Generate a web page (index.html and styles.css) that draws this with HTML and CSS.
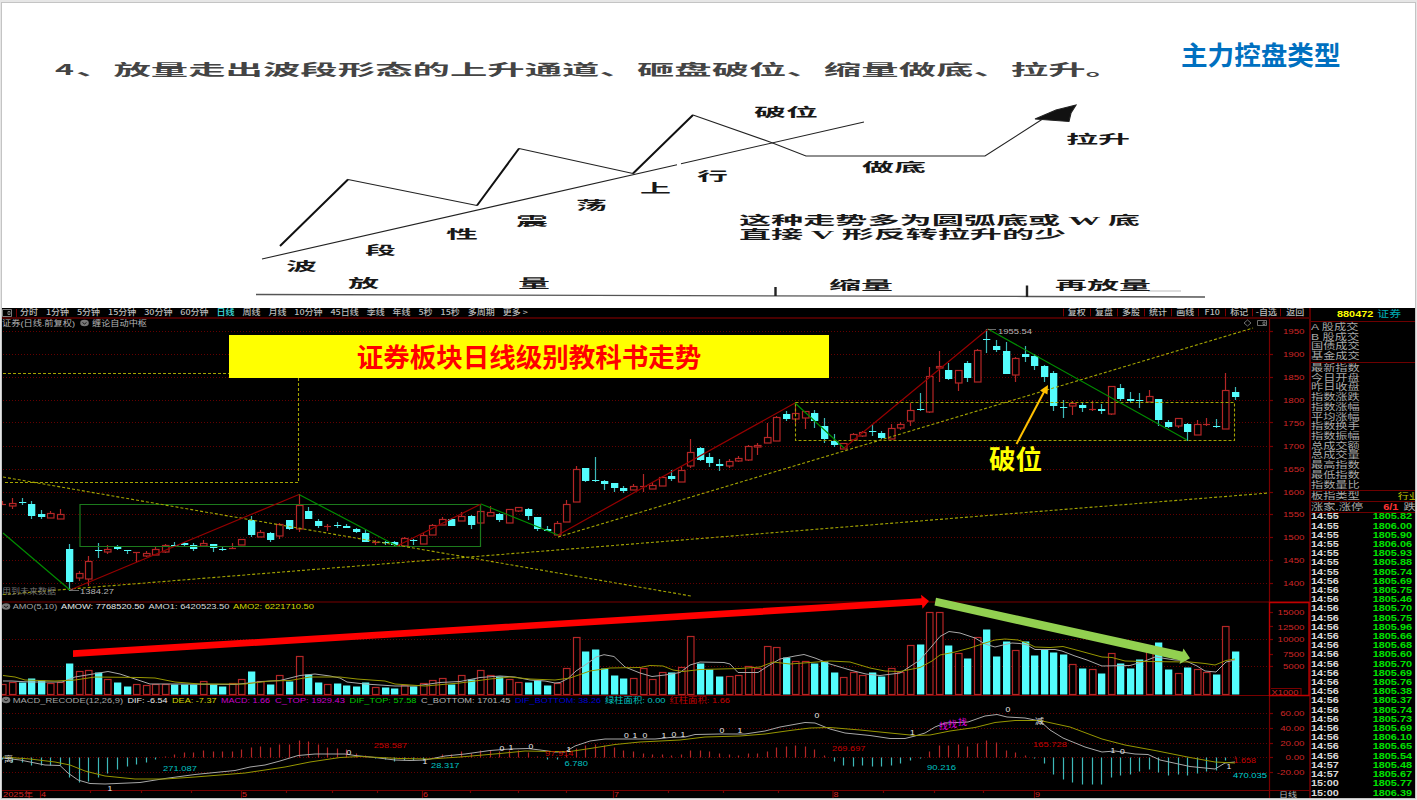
FILE: index.html
```html
<!doctype html>
<html lang="zh-CN">
<head>
	<meta charset="UTF-8">
	<title>主力控盘类型</title>
	<link rel="stylesheet" href="styles.css">
</head>
<body>
	<div class="slide">
		<section class="theory">
			<svg id="theory" viewBox="2 3 1413 305" width="1413" height="305">
				<g class="sketch">
					<path d="M262 259L677 164.700M681 163.700L864 122"/>
					<path d="M348 179.500L477 205.500M519 148.500L633 173.500M693 115L770 142L806 156H985L1052 113"/>
					<path class="bold" d="M280 246L348 179.500M477 205.500L519 148.500M633 173.500L693 115"/>
					<path class="axis" d="M256 294.500L1028 296.500L1205 297"/>
					<path class="faint" d="M1148 291H1181"/>
					<path class="tick" d="M775.500 287V296M1027 285.500V297"/>
					<path class="head" d="M1076 105L1056 110L1035 119L1069 121.500L1071 113Z"/>
				</g>
			</svg>
			<h1>主力控盘类型</h1>
		</section>

		<section class="terminal">
			<div class="main">
				<nav class="toolbar">
					<svg class="panel-icon" viewBox="0 0 10 8" width="10" height="8"><path d="M.5 .5H9.500V7.500H.5ZM6 2.500H8V5.500H6Z"/></svg>
					<div class="periods">
						<span>分时</span><span>1分钟</span><span>5分钟</span><span>15分钟</span><span>30分钟</span><span>60分钟</span>
						<span class="active">日线</span><span>周线</span><span>月线</span><span>10分钟</span><span>45日线</span><span>季线</span>
						<span>年线</span><span>5秒</span><span>15秒</span><span>多周期</span><span>更多 &gt;</span>
					</div>
					<div class="tools">
						<span>复权</span><span>复盘</span><span>多股</span><span>统计</span><span>画线</span><span>F10</span><span>标记</span><span>-自选</span><span>返回</span>
					</div>
				</nav>
				<svg id="chart" viewBox="2 319 1308 479" width="1308" height="479"></svg>
				<div class="banner">证券板块日线级别教科书走势</div>
				<div class="break">破位</div>
			</div>

			<aside class="quote">
				<header><b>880472</b><span>证券</span></header>
				<ul class="market">
					<li>A 股成交</li><li>B 股成交</li><li>国债成交</li><li>基金成交</li>
				</ul>
				<ul class="index">
					<li>最新指数</li><li>今日开盘</li><li>昨日收盘</li><li>指数涨跌</li><li>指数涨幅</li><li>平均涨幅</li><li>指数换手</li>
					<li>指数振幅</li><li>总成交额</li><li>总成交量</li><li>最高指数</li><li>最低指数</li><li>指数量比</li>
				</ul>
				<div class="row"><span>板指类型</span><i>行业</i></div>
				<div class="row count"><span>涨家.涨停</span><b>6/1</b><span>跌</span></div>
				<ol id="ticks"></ol>
			</aside>
		</section>
	</div>
	<script src="chart.js"></script>
</body>
</html>
```
FILE: styles.css
```css
html, body {height: 100%; margin: 0;}
body {
	overflow: hidden;
	background: #e6e6e6;
	font-family: "Liberation Sans", "Noto Sans CJK SC", sans-serif;
}
svg {display: block;}
ul, ol {list-style: none; margin: 0; padding: 0;}

.slide {
	width: 1413px; height: 795px;
	margin: 2px 1px 0;
	border: 1px solid #c4c4c4;
}

/* theory sketch */
.theory {
	position: relative;
	height: 305px;
	background: white;
}
.theory h1 {
	position: absolute;
	top: 33px; left: 1179px;
	margin: 0;
	font: bold 26.6px/36px "Noto Sans CJK SC", sans-serif;
	color: #0070c0;
	white-space: nowrap;
}
.sketch {fill: none; stroke: #222; stroke-width: 1.1;}
.sketch .bold {stroke: #111; stroke-width: 2;}
.sketch .axis {stroke: #555; stroke-width: 1.3;}
.sketch .faint {stroke: #aaa; stroke-width: .8;}
.sketch .tick {stroke-width: 2.4;}
.sketch .head {fill: #111;}

/* trading terminal */
.terminal {
	display: grid;
	grid-template-columns: 1308px 105px;
	height: 490px;
	background: black;
	overflow: hidden;
}
.main {position: relative;}
.toolbar {
	display: flex;
	align-items: center;
	height: 9px;
	border-bottom: 2px solid #4a0000;
	font: 500 9px/9px "Noto Sans CJK SC", sans-serif;
	color: #bcbcbc;
	white-space: nowrap;
}
.toolbar span {transform: scaleY(.84);}
.panel-icon {fill: none; stroke: #999; stroke-width: .8; padding-right: 4px; border-right: 1px solid #700;}
.periods {
	display: flex;
	justify-content: space-between;
	width: 508px;
	margin-left: 3px;
}
.periods .active {color: #3fe0e0;}
.tools {
	display: grid;
	grid-template-columns: repeat(8, 27.1px) 30.5px;
	margin-left: auto;
	text-align: center;
}
.tools span {border-left: 1px solid #800000;}
.banner {
	position: absolute;
	left: 227px; top: 27px;
	width: 600px; height: 43px;
	background: #ff0;
	color: red;
	font: bold 26.5px/42px "Noto Sans CJK SC", sans-serif;
	text-align: center;
}
.break {
	position: absolute;
	left: 987px; top: 131px;
	color: #ff0;
	font: bold 26.6px/38px "Noto Sans CJK SC", sans-serif;
}

/* chart */
.grid {stroke: #640000; stroke-width: 1; stroke-dasharray: 1 2;}
.frame {fill: none; stroke: #780000; stroke-width: 1.2;}
.frame.hot {stroke: #c00000; stroke-width: 1.3;}
.dash {fill: none; stroke: #a4a400; stroke-width: 1.1; stroke-dasharray: 3 2;}
.up {fill: black; stroke: #b42626; stroke-width: 1.2;}
.up-wick {stroke: #b42626; stroke-width: 1.2;}
.down {fill: #54fcfc;}
.down-wick {stroke: #3cb8b8; stroke-width: 1.2;}
.rise {fill: none; stroke: #960000; stroke-width: 1.2;}
.fall {fill: none; stroke: #008c00; stroke-width: 1.2;}
.pivot {fill: none; stroke: #1c7a1c; stroke-width: 1.2;}
.fast {fill: none; stroke: #a8a8a8; stroke-width: 1;}
.slow {fill: none; stroke: #969600; stroke-width: 1;}
.icon {fill: none; stroke: #888; stroke-width: .8;}

/* quote panel */
.quote {
	border-left: 2px solid #5a0000;
	margin-left: -1px;
	overflow: hidden;
	color: #a8a8a8;
	font: 12.2px/9.73px "Liberation Sans", "Noto Sans CJK SC", sans-serif;
	white-space: nowrap;
}
.quote header {
	height: 13px;
	border-bottom: 1px solid #6e0000;
	padding-left: 26px;
	line-height: 12px;
}
.quote header b {color: #ff0; font-size: 10.9px; display: inline-block; transform: scaleY(.78);}
.quote header span {color: #00b0b8; font-size: 11.8px; margin-left: 4px; display: inline-block; transform: scaleY(.8);}
.quote li {height: 9.73px; transform: scaleY(.74);}
.market {padding: 1px 0 0; height: 39px; border-bottom: 1px solid #6e0000;}
.index {padding: 1px 0 0; height: 126px; border-bottom: 1px solid #6e0000;}
.row {
	display: flex;
	height: 10px;
	border-bottom: 1px solid #6e0000;
	line-height: 10px;
}
.row > * {transform: scaleY(.76);}
.row i {margin-left: 38px; font-style: normal; color: #c0c000; font-size: 11px;}
.row b {margin: 0 5px 0 20px; color: #f33; font-size: 11px;}
#ticks {margin-top: -.6px;}
#ticks li {
	display: flex;
	justify-content: space-between;
	height: 9.215px;
	padding-right: 3px;
	font: bold 10.9px/9.21px "Liberation Sans", sans-serif;
	transform: scaleY(.75);
	color: #d8d8d8;
}
#ticks b {color: #00e000;}
```
FILE: chart.js
```js
var NS = 'http://www.w3.org/2000/svg';
var chart = document.getElementById('chart');
var theory = document.getElementById('theory');

function add(parent, tag, attrs) {
	var el = document.createElementNS(NS, tag);
	for (var key in attrs) el.setAttribute(key, attrs[key]);
	parent.appendChild(el);
	return el;
}
function path(cls, d) {
	return add(chart, 'path', {'class': cls, d: d});
}
// text stretched to width w, y is the vertical middle
function label(parent, str, x, y, w, size, fill, weight, family) {
	var el = add(parent, 'text', {
		x: x, y: y + size*.36, textLength: w, lengthAdjust: 'spacingAndGlyphs',
		'font-size': size, fill: fill, 'font-weight': weight || 400,
		'font-family': family || '"Liberation Sans", "Noto Sans CJK SC", sans-serif'
	});
	el.textContent = str;
}

// ---- theory sketch
var HEI = '"Noto Sans CJK SC", sans-serif';
var SONG = '"Liberation Serif", "Noto Sans CJK SC", serif';
label(theory, '4', 55, 70, 19, 15, '#444', 700, HEI);
label(theory, '、放量走出波段形态的上升通道、砸盘破位、缩量做底、拉升。', 76, 70, 1047, 14.500, '#444', 700, HEI);
[
	['波', 286, 267, 31], ['段', 365, 251, 31], ['性', 446, 235, 32], ['震', 516, 222, 32],
	['荡', 576, 206, 31], ['上', 640, 189, 31], ['行', 697, 177, 31],
	['破位', 754, 113, 64], ['做底', 862, 168, 64], ['拉升', 1066, 140, 64],
	['放', 348, 284, 31], ['量', 518, 284, 32], ['缩量', 829, 285.500, 64], ['再放量', 1055, 286, 96],
	['这种走势多为圆弧底或 W 底', 739, 220.500, 401], ['直接 V 形反转拉升的少', 739, 234.500, 327]
].forEach(function(t){
	label(theory, t[0], t[1], t[2], t[3], 12.300, '#181818', 700, SONG);
});

// ---- bars: [up, high, top, bottom, low, volume, macd]
var bars = [
	[1,501,504,505,505,10,-2],[1,498,503,506,509,12,-5],[0,498,502,503,505,12,-5],[0,501,504,516,519,16,-8],[0,510,514,517,519,14,-8],
	[1,511,513,518,518,11,-8],[1,509,514,519,519,12,-8],[0,544,549,582,591,31,-20],[1,571,573,578,581,23,-25],[1,556,561,579,586,24,-24],
	[0,543,550,551,558,22,-20],[1,545,549,552,554,15,-16],[0,545,546,549,550,12,-12],[0,550,550,551,554,8,-9],[1,552,552,553,562,10,-7],
	[1,551,553,556,557,9,-5],[1,547,549,555,555,10,-2],[1,544,545,552,553,10,1],[0,542,545,546,547,10,3],[0,542,543,545,547,10,5],
	[0,543,545,549,551,10,5],[1,540,543,546,546,13,7],[0,544,544,548,552,10,6],[0,546,549,550,551,8,6],[1,543,548,549,549,11,6],
	[1,539,539,545,545,15,8],[0,516,520,535,537,23,10],[1,530,532,537,537,13,11],[0,532,533,540,542,10,10],[1,523,524,536,539,19,13],
	[0,520,520,529,530,13,13],[1,494,505,529,532,38,17],[0,507,511,519,519,20,16],[0,519,521,526,528,12,13],[1,524,526,527,531,10,10],
	[0,522,525,526,528,11,9],[0,524,526,528,528,9,8],[0,528,529,532,533,8,4],[0,529,533,542,542,12,2],[1,540,542,543,545,7,-1],
	[0,541,542,543,545,7,-2],[0,541,542,545,547,6,-4],[1,537,538,546,546,9,-3],[0,539,540,541,545,8,-3],[1,533,535,544,544,11,-3],
	[1,524,525,535,535,14,0],[1,517,519,525,525,16,3],[0,518,519,526,526,10,3],[1,512,516,521,521,19,6],[0,515,516,525,529,15,4],
	[1,504,511,523,524,24,7],[1,506,512,516,516,19,7],[0,513,514,520,522,18,6],[1,509,509,523,523,15,7],[1,507,507,511,512,12,7],
	[0,508,509,516,520,12,5],[0,517,517,529,531,14,1],[0,526,529,531,531,9,-2],[1,521,523,535,535,11,-2],[1,500,504,522,522,26,2],
	[1,466,469,502,502,57,9],[0,468,468,481,482,43,12],[0,457,480,481,482,45,13],[0,480,481,484,490,26,12],[0,483,483,488,492,19,10],
	[0,486,488,491,493,16,7],[1,484,486,490,490,16,6],[1,474,486,487,492,26,4],[1,483,485,489,489,15,3],[1,476,477,486,486,22,3],
	[0,470,476,479,481,22,2],[1,467,470,482,482,27,3],[1,439,452,466,468,58,7],[0,447,448,460,461,31,7],[0,453,457,463,467,25,6],
	[0,459,464,466,471,18,4],[1,459,461,466,468,18,3],[1,456,458,461,462,19,2],[1,445,446,460,461,28,4],[1,443,445,447,455,26,4],
	[1,423,437,443,443,48,6],[1,416,417,441,441,47,10],[0,411,414,419,421,37,11],[1,402,413,419,424,33,12],[1,411,411,418,429,33,11],
	[0,410,413,421,428,31,8],[0,418,426,439,443,33,2],[0,434,441,445,447,22,-4],[1,443,443,449,449,17,-8],[1,433,434,440,440,22,-9],
	[1,431,432,436,437,19,-8],[0,424,431,432,436,22,-9],[0,431,433,438,439,18,-9],[1,424,428,439,439,26,-8],[1,422,424,428,430,22,-6],
	[1,403,410,421,426,49,-3],[0,393,409,410,411,50,-1],[1,367,376,412,413,82,6],[1,351,366,368,382,82,12],[0,363,370,379,380,49,12],
	[1,370,370,383,391,41,13],[0,361,363,378,382,36,11],[1,349,350,382,382,57,14],[0,329,339,340,353,65,17],[0,340,346,350,352,38,15],
	[0,342,351,374,374,53,7],[1,357,358,375,382,44,5],[0,346,354,357,362,53,2],[0,354,356,366,370,39,-1],[0,365,366,377,382,45,-6],
	[0,371,373,406,411,42,-17],[0,400,407,408,418,40,-22],[1,401,403,406,415,30,-25],[0,402,405,408,412,26,-27],[1,401,409,410,411,25,-27],
	[0,404,409,411,414,21,-27],[1,386,386,414,415,41,-20],[0,384,388,399,401,31,-18],[0,392,399,401,403,26,-17],[0,393,400,401,408,35,-14],
	[1,390,396,402,402,46,-12],[0,399,399,420,426,52,-15],[0,420,422,427,428,25,-18],[1,418,418,426,428,21,-17],[0,423,424,432,441,27,-18],
	[1,420,424,435,435,25,-16],[1,418,424,425,426,22,-14],[0,419,426,427,428,20,-13],[1,373,390,429,429,68,-3],[0,387,392,397,400,43,1]
];

// ---- grid and axes
var scales = [
	[331.300, '1950'], [354.300, '1900'], [377.300, '1850'], [400, '1800'], [422.700, '1750'], [446, '1700'],
	[469, '1650'], [492, '1600'], [514.300, '1550'], [537.300, '1500'], [560.300, '1450'], [583.300, '1400'],
	[612.300, '15000', 1], [626.700, '12500', 1], [639.500, '10000'], [654, '7500', 1], [666.500, '5000'],
	[713.500, '60.00'], [728.500, '40.00'], [743, '20.00'], [757.500, '0.00'], [772, '-20.00']
];
scales.forEach(function(s){
	var y = Math.floor(s[0]) + .5;
	if (!s[2]) path('grid', 'M3 ' + y + 'H1269');
	path('frame', 'M1269 ' + y + 'h4');
	var w = s[1].replace(/[.-]/g, '').length*5.400 + (s[1].indexOf('.') > 0 ? 2.700 : 0) + (s[1][0] == '-' ? 3.500 : 0);
	label(chart, s[1], 1304.500 - w, s[0], w, 8, '#cc2626');
});
path('frame', 'M2 602H1310M2 695.500H1310M2 790.500H1310M1269.500 319V798');
path('frame hot', 'M1269.500 602.500H1309V695.500H1269.500Z');
path('frame', 'M1271 688.500H1301V695');
label(chart, 'X1000', 1271.500, 692, 27, 7.500, '#cc2626');

// ---- candles, volume, macd columns
bars.forEach(function(b, i){
	var x = 2.900 + 9.554*i;
	var cx = Math.floor(x) + .5;
	var cls = b[0] ? 'up' : 'down';
	path(cls + '-wick', 'M' + cx + ' ' + b[1] + 'V' + b[2] + 'M' + cx + ' ' + b[3] + 'V' + b[4]);
	var h = b[3] - b[2];
	if (b[0]) {
		if (h > 1) add(chart, 'rect', {'class': cls, x: cx - 3, y: b[2] + .5, width: 6.500, height: h - .5});
		else path('up-wick', 'M' + (cx - 3.500) + ' ' + (b[2] + .5) + 'h7');
		add(chart, 'rect', {'class': cls, x: cx - 3, y: 694.500 - b[5], width: 6.500, height: b[5]});
	} else {
		add(chart, 'rect', {'class': cls, x: cx - 3.500, y: b[2], width: 7.300, height: Math.max(h, 1)});
		add(chart, 'rect', {'class': cls, x: cx - 3.500, y: 694.500 - b[5], width: 7.300, height: b[5]});
	}
	path(b[6] > 0 ? 'up-wick' : 'down-wick', 'M' + cx + ' 757.500v' + -b[6]);
});

// ---- pens, pivots and trend lines
path('pivot', 'M80 504.500H480.500V546.500H80Z');
path('dash', 'M3 373.500H298.500V482.500H3M3 477L691 596M3 594.500L70 589L1269 493M558 537L1253 328M795.500 402.500H1234.500V440.500H795.500Z');
path('rise', 'M70 590L299 494.500M397 546L481 504M558 535L795 403M844 448L988 329');
path('fall', 'M3 533L70 590M299 494.500L397 546M481 504L558 535M795 403L844 448M988 329L1187 440');

// ---- moving averages of the turnover
path('fast', 'M3 681L12 681 30 682 62 682 75 677 90 674.500 108 671.500 120 674 150 684 180 684 235 684.500 262 681.500 280 680.500 290 678 300 675.500 315 674 330 676 340 678 347 682 365 684 395 686 415 686 440 682.500 460 681.500 480 677.500 500 676 515 677 530 680 545 681 555 683 560 682.500 568 678.500 576 671 588 663 596 657 604 654.700 614 656.500 625 667 640 673 652 676.500 665 675 680 672.500 690 665 700 662 724 662.500 730 664 738 672.500 758 672.500 768 666 780 659 795 656 804 654.500 815 658 830 664 850 670 866 674 880 675.500 900 673 920 660 932 646 940 636.500 949 631.500 960 633 975 638 985 644 995 647 1003 645 1012 643 1020 643.500 1027 645 1035 649.500 1055 649.500 1062 651 1075 656 1087 660 1102 666 1130 665.500 1145 661 1155 657 1175 660 1185 660.500 1197 666 1205 671 1216 672 1226 662 1235 660');
path('slow', 'M3 675.500L15 677 25 680 55 681 75 680 95 677 140 677.500 155 678 175 682 200 684 245 684 270 681 290 680.500 310 677 340 677 357 679 385 681 395 684 425 686 460 683 490 679 510 677 530 679 555 680 570 678 590 671 610 668 640 667.500 650 665.500 663 666 673 670 683 671.500 700 669.500 740 668.500 760 667 773 662 790 664 810 662.500 830 661 850 662 870 668 885 671 900 671.500 920 667.500 932 661 940 655 955 652 970 648 985 643 995 640 1005 639 1018 640 1027 643 1035 647 1050 647.500 1063 646.500 1080 651 1102 657 1112 657.500 1125 661 1145 661.500 1190 662 1205 663.500 1215 665 1226 660.500 1235 659');

// ---- DIF and DEA
path('fast', 'M3 758L20 760 45 765 60 765.500 68 773 78 780 90 783.500 105 784 140 782.500 165 778.500 195 774.500 215 772.500 235 770.500 250 767 265 765 280 761 298 755.500 315 754 345 754 355 755.500 375 757.500 395 760 410 760.500 425 760 445 756 465 754 490 750.500 510 749 528 748.500 540 750 555 752 565 752 575 746 590 741 605 739 655 739 670 737.500 685 737 695 734.500 720 734 745 734 765 731 780 727 805 722.500 815 723 830 729 845 733 870 735.500 890 738.500 905 738.500 915 736 925 733 935 727 945 723 968 722 985 716 997 714.500 1007 717 1025 718 1040 721 1050 730 1063 738 1085 747 1102 752 1115 751 1135 754 1148 754.500 1160 760 1190 766.500 1215 769 1225 763 1235 762');
path('slow', 'M3 757L30 759 55 762 70 765 85 771 105 776 135 779 165 779 195 777 245 773 285 767 310 762 340 757.500 360 756.500 400 758.500 430 759 460 757 500 753.500 525 751 550 751.500 570 751.500 590 748.500 615 744.500 640 742 680 740 705 737 740 736 765 734 790 730.500 810 728 830 727.500 860 730 890 733 915 735.500 930 735 950 731 975 727.500 995 722.500 1015 720.500 1040 720.500 1070 727 1102 739 1125 745 1155 750.500 1190 757.500 1215 762 1235 763');

// ---- captions: text, x, y, width, colour
[
	['证券(日线.前复权)', 2, 323, 73, '#b4b4b4'], ['缠论自动中枢', 92, 323, 55, '#b4b4b4'],
	['1955.54', 998, 331, 34, '#b4b4b4'], ['1384.27', 80, 591.500, 34, '#b4b4b4'], ['用到未来数据', 2, 591.500, 54, '#707070'],
	['AMO(5,10)', 12.700, 606.500, 44.500, '#a4a4a4'], ['AMOW: 7768520.50', 61, 606.500, 83.500, '#e8e8e8'],
	['AMO1: 6420523.50', 148.500, 606.500, 81, '#d8d8d8'], ['AMO2: 6221710.50', 233, 606.500, 81, '#d4d400'],
	['MACD_RECODE(12,26,9)', 12.700, 700, 110.500, '#a4a4a4'], ['DIF: -6.54', 127.500, 700, 40, '#e8e8e8'],
	['DEA: -7.37', 172, 700, 44.500, '#d4d400'], ['MACD: 1.66', 221, 700, 49, '#c800c8'],
	['C_TOP: 1929.43', 275, 700, 70, '#c800c8'], ['DIF_TOP: 57.58', 349.500, 700, 67, '#00c800'],
	['C_BOTTOM: 1701.45', 421, 700, 89.500, '#b4b4b4'], ['DIF_BOTTOM: 38.26', 515, 700, 86, '#0000d0'],
	['绿柱面积: 0.00', 605, 700, 60.500, '#00c4c4'], ['红柱面积: 1.66', 669.500, 700, 60.500, '#c80000'],
	['271.087', 163, 768, 34, '#00c0c0'], ['258.587', 373.700, 745, 33.500, '#c80000'], ['28.317', 431, 765, 28.500, '#00c0c0'],
	['97.914', 545, 753.500, 28.500, '#c80000'], ['6.780', 564.500, 763.500, 23.500, '#00c0c0'], ['269.697', 832, 748.500, 33.500, '#c80000'],
	['90.216', 927, 767.500, 29, '#00c0c0'], ['165.728', 1033, 744, 34, '#c80000'], ['1.658', 1233.500, 760, 22.500, '#c80000'],
	['470.035', 1233, 775.500, 34, '#00d0d0'],
	['找', 939, 726, 9, '#e000e0'], ['找', 948, 724, 9, '#e000e0'], ['找', 958, 722, 9, '#e000e0'], ['减', 1035, 721, 9, '#ddd'], ['离', 4, 759, 9, '#ccc']
].forEach(function(t){
	label(chart, t[0], t[1], t[2], t[3], 7.800, t[4]);
});

// ---- timeline
[
	['2025年', 3, 30, '#d02424'], ['4', 41, 5, '#d02424'], ['5', 242, 5, '#d02424'], ['6', 423, 5, '#d02424'], ['7', 614, 5, '#d02424'],
	['8', 833.500, 5, '#d02424'], ['9', 1035, 5, '#d02424'], ['日线', 1279, 18, '#b4b4b4']
].forEach(function(t){
	label(chart, t[0], t[1], 794.300, t[2], 7, t[3], 400, '"Liberation Sans", "Noto Sans CJK SC", sans-serif');
});

// buy / sell markers
[
	[1,110,788],[0,349,752],[1,425,761],[0,502,748],[1,511,747],[0,531,746],[1,569,749],[0,626.500,735],[1,635,735],[0,645,735],
	[1,664,735],[0,674,734.500],[1,683,734],[0,722,730],[1,740,730],[0,817,715],[1,912.500,732],[0,1008,709],[1,1113,750],[0,1122.500,751],[1,1229,766]
].forEach(function(m){
	label(chart, m[0], m[1] - 2.400, m[2], 4.800, 7.800, '#e8e8e8');
});

// month ticks
path('frame', 'M40.500 791v7M241.500 791v7M422.500 791v7M613.500 791v7M833 791v7M1034.500 791v7');
path('frame', 'M90.500 791v2M141.500 791v2M191.500 791v2M286.500 791v2M332.500 791v2M377.500 791v2M470.500 791v2M518.500 791v2M566.500 791v2M668.500 791v2M723.500 791v2M778.500 791v2M883.500 791v2M934.500 791v2M983.500 791v2');

// small glyphs
[[84.500, 323], [6, 606.500], [6, 700]].forEach(function(c){
	add(chart, 'ellipse', {cx: c[0], cy: c[1], rx: 4.300, ry: 3.200, fill: '#777'});
	path('icon', 'M' + (c[0] - 2) + ' ' + (c[1] - .5) + 'l2 1.500 2-1.500').style.stroke = '#000';
});
path('icon', 'M1247.500 320l3.500 3-3.500 3-3.500-3zM1257.500 320.500h9v5h-9zM1263 322h2v2.500h-2zM70 590.500h9M70 590.500l3-1.500M988 329.500h8');

// ---- presenter's arrows
add(chart, 'path', {fill: '#f00', d: 'M73 650.300L921.500 598.300L921 594.800L929 601L922.500 608.700L922 605L73 657Z'});
add(chart, 'path', {fill: '#92d050', d: 'M936 597.800L1182.500 651.800L1183.500 648.500L1190 658.300L1179.500 664L1180.500 660.500L934.500 605.500Z'});
add(chart, 'path', {stroke: '#ffc000', 'stroke-width': 2, d: 'M1016.500 444L1044.500 391'});
add(chart, 'path', {fill: '#ffc000', d: 'M1048 385L1047.500 394.500L1040 390.500Z'});

// ---- tick list
var prices = ('1805.82 1806.00 1805.90 1806.06 1805.93 1805.88 1805.74 1805.69 1805.75 1805.46 1805.70 1805.75 1805.96 1805.66 1805.68 1805.60 ' +
	'1805.70 1805.69 1805.76 1805.38 1805.37 1805.74 1805.73 1805.69 1806.10 1805.65 1805.54 1805.48 1805.67 1805.77 1806.39').split(' ');
document.getElementById('ticks').innerHTML = prices.map(function(price, i){
	var time = i < 7 ? '14:55' : i < 27 ? '14:56' : i < 29 ? '14:57' : '15:00';
	return '<li><span>' + time + '</span><b>' + price + '</b></li>';
}).join('');
```
